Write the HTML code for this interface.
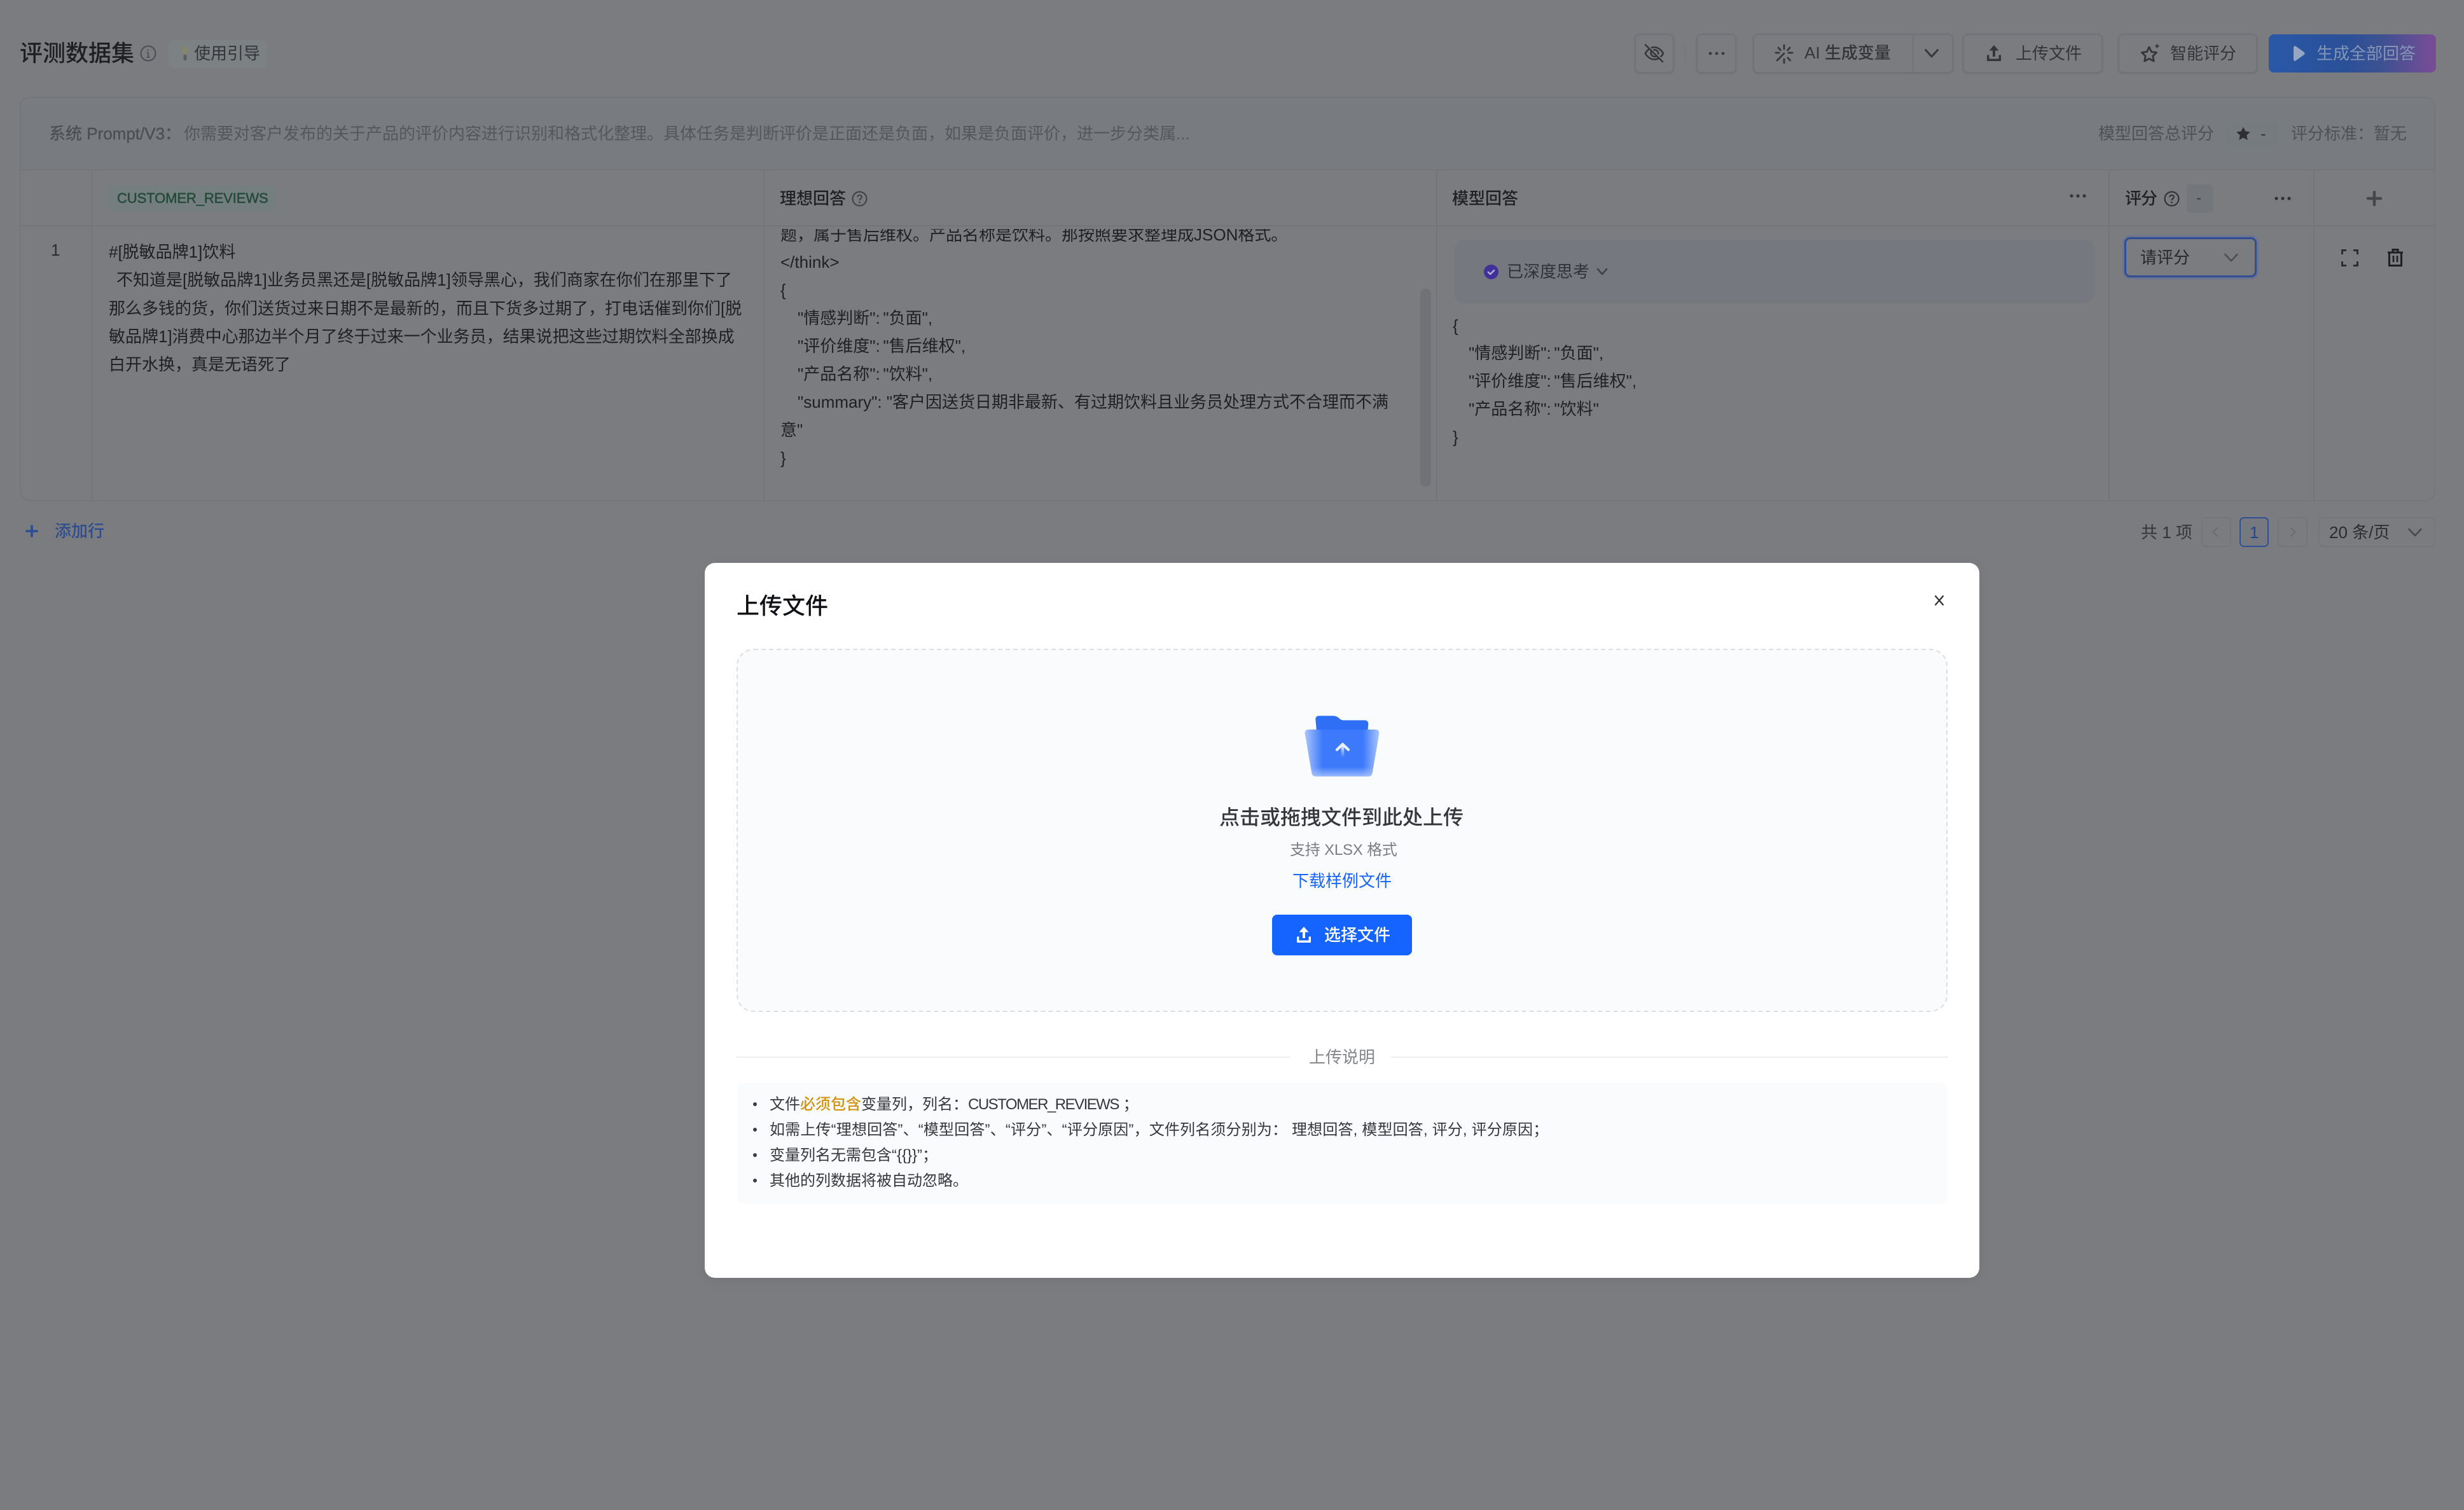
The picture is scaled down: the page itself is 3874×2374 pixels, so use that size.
<!DOCTYPE html>
<html lang="zh-CN">
<head>
<meta charset="utf-8">
<title>评测数据集</title>
<style>
html,body{margin:0;padding:0;width:3874px;height:2374px;overflow:hidden;background:#7a7c80}
body{position:relative;font-family:"Liberation Sans","Noto Sans CJK SC",sans-serif;font-size:26px;color:#26282c}
.t{position:absolute;white-space:pre;line-height:44px}
.b{position:absolute;box-sizing:border-box}
.btn{position:absolute;box-sizing:border-box;top:53px;height:62px;border:2px solid #70737a;border-radius:8px;box-shadow:0 1px 2px rgba(40,42,48,.18)}
svg{position:absolute;overflow:visible}
.hl{position:absolute;background:#72757a}
.m{color:#1f2024}
.ws{word-spacing:-2.5px}
</style>
</head>
<body>
<!-- header -->
<div class="t" style="left:31px;top:62px;font-size:36px;font-weight:500;color:#1d1f23">评测数据集</div>
<svg style="left:220px;top:71px" width="26" height="26" viewBox="0 0 26 26" fill="none" stroke="#4b4e54" stroke-width="2"><circle cx="13" cy="13" r="11.5"/><path d="M13 11.5V19M10.5 19h5M10.5 11.5H13" stroke-width="1.8"/><circle cx="13" cy="7.6" r="1.1" fill="#4b4e54" stroke="none"/></svg>
<div class="b" style="left:265px;top:63px;width:154px;height:44px;background:#7c8184;border-radius:8px"></div>
<svg style="left:284px;top:71px" width="14" height="28" viewBox="0 0 14 28"><ellipse cx="7" cy="8" rx="5.5" ry="7.5" fill="#85846f"/><rect x="4.5" y="15" width="5" height="9" rx="2" fill="#5a5c5e"/></svg>
<div class="t" style="left:305px;top:62px;color:#33353a">使用引导</div>

<!-- toolbar -->
<div class="btn" style="left:2570px;width:62px"></div>
<svg style="left:2585px;top:68px" width="32" height="32" viewBox="0 0 32 32" fill="none" stroke="#35373c" stroke-width="2.6" stroke-linecap="round" stroke-linejoin="round"><path d="M2 2.5L29 29"/><path d="M8 9C5 11 3 14 1.8 16c3 5 8 9.500 14.200 9.500 2.500 0 4.800-.7 6.800-1.800M12 6.800c1.300-.3 2.600-.5 4-.5 6.200 0 11.200 4.700 14.200 9.700-.9 1.500-2.200 3.200-3.800 4.800"/><path d="M11 13c-1.300 3.500 1 8 5.500 8 1 0 2-.3 2.800-.8M15.500 10.500c4-.5 7 2.500 6.700 6"/></svg>
<div class="b" style="left:2648px;top:70px;width:2px;height:30px;background:#75787c"></div>
<div class="btn" style="left:2667px;width:63px"></div>
<svg style="left:2686px;top:80px" width="26" height="8" viewBox="0 0 26 8" fill="#3a3c41"><circle cx="3" cy="4" r="2.400"/><circle cx="13" cy="4" r="2.400"/><circle cx="23" cy="4" r="2.400"/></svg>
<div class="btn" style="left:2756px;width:315px"></div>
<div class="b" style="left:3007px;top:54px;width:2px;height:60px;background:#70737a"></div>
<svg style="left:2790px;top:69px" width="30" height="32" viewBox="0 0 30 32" fill="none" stroke="#35373c" stroke-width="2.800" stroke-linecap="round"><path d="M15 2v6M15 24v6M24 6l-3.500 4M4 26l11-11M6 6l3.500 4M21 22l3.500 4M28 14h-6M2 14h5"/></svg>
<div class="t" style="left:2837px;top:61px;color:#33353a;font-weight:500">AI 生成变量</div>
<svg style="left:3026px;top:76px" width="22" height="16" viewBox="0 0 22 16" fill="none" stroke="#33353a" stroke-width="2.800" stroke-linecap="round" stroke-linejoin="round"><path d="M1.500 2.500L11 13 20.500 2.500"/></svg>
<div class="btn" style="left:3086px;width:220px"></div>
<svg style="left:3124px;top:70px" width="22" height="28" viewBox="0 0 22 28" fill="#33353a"><path d="M11 1L18.500 9.500H13V19H9V9.500H3.500Z"/><path d="M0 16.500h3.400V22.500H18.600V16.500H22V26H0Z"/></svg>
<div class="t" style="left:3169px;top:62px;color:#33353a">上传文件</div>
<div class="btn" style="left:3330px;width:219px"></div>
<svg style="left:3365px;top:68px" width="32" height="32" viewBox="0 0 32 32" fill="none" stroke="#33353a" stroke-width="2.800" stroke-linejoin="round"><path d="M14 6l3.600 7.500 8 1-5.800 5.600 1.500 8L14 24.200 6.700 28.100l1.500-8L2.400 14.500l8-1Z"/><path d="M26.500 1.500v6M23.500 4.500h6" stroke-width="2"/></svg>
<div class="t" style="left:3412px;top:62px;color:#33353a">智能评分</div>
<div class="b" style="left:3567px;top:54px;width:263px;height:60px;border-radius:8px;background:linear-gradient(90deg,#2a58a8 0%,#2a5098 45%,#3e5192 68%,#7a4c95 100%)"></div>
<svg style="left:3603px;top:71px" width="22" height="26" viewBox="0 0 22 26"><path d="M3 3.500C3 1.500 5 .6 6.500 1.600L19.500 11c1.400 1 1.400 3 0 4L6.500 24.400C5 25.400 3 24.500 3 22.500Z" fill="#97a6c3"/></svg>
<div class="t" style="left:3642px;top:62px;color:#8496b8">生成全部回答</div>

<!-- table card -->
<div class="b" style="left:31px;top:152px;width:3798px;height:636px;border:2px solid #73767b;border-radius:16px;overflow:hidden">
  <div class="b" style="left:0;top:0;width:100%;height:114px;background:#787c80"></div>
</div>
<div class="hl" style="left:31px;top:266px;width:3798px;height:2px"></div>
<div class="hl" style="left:31px;top:354px;width:3798px;height:2px"></div>
<div class="hl" style="left:143px;top:267px;width:2px;height:520px"></div>
<div class="hl" style="left:1200px;top:267px;width:2px;height:520px"></div>
<div class="hl" style="left:2258px;top:267px;width:2px;height:520px"></div>
<div class="hl" style="left:3315px;top:267px;width:2px;height:520px"></div>
<div class="hl" style="left:3637px;top:267px;width:2px;height:520px"></div>

<!-- prompt strip -->
<div class="t" style="left:77px;top:188px;color:#4c4f54;-webkit-text-stroke:.4px #4c4f54">系统 Prompt/V3：</div>
<div class="t" style="left:289px;top:188px;color:#54575c">你需要对客户发布的关于产品的评价内容进行识别和格式化整理。具体任务是判断评价是正面还是负面，如果是负面评价，进一步分类属...</div>
<div class="t" style="left:3299px;top:188px;color:#4e5156">模型回答总评分</div>
<div class="b" style="left:3499px;top:192px;width:83px;height:37px;background:#767b7f;border-radius:6px"></div>
<svg style="left:3515px;top:198px" width="24" height="24" viewBox="0 0 24 24" fill="#2d2f34"><path d="M12 1.500l3.300 6.900 7.500 1-5.500 5.200 1.400 7.500L12 18.500l-6.700 3.600 1.400-7.500L1.200 9.400l7.500-1Z"/></svg>
<div class="t" style="left:3554px;top:188px;color:#33353a">-</div>
<div class="t" style="left:3602px;top:188px;color:#4e5156">评分标准：暂无</div>

<!-- table header -->
<div class="b" style="left:168px;top:292px;width:267px;height:40px;background:#757e7f;border-radius:6px"></div>
<div class="t" style="left:184px;top:290px;font-size:22px;color:#234a39;-webkit-text-stroke:.5px #234a39;letter-spacing:-.1px">CUSTOMER_REVIEWS</div>
<div class="t" style="left:1226px;top:290px;font-weight:500;color:#1f2125">理想回答</div>
<svg style="left:1339px;top:300px" width="25" height="25" viewBox="0 0 24 24" fill="none" stroke="#3f4146" stroke-width="2"><circle cx="12" cy="12" r="10.500"/><path d="M8.800 9.500C8.800 7.500 10.400 6.500 12 6.500c1.800 0 3.200 1.200 3.200 2.900 0 2.400-3.200 2.400-3.200 5"/><circle cx="12" cy="17.500" r="1.300" fill="#3f4146" stroke="none"/></svg>
<div class="t" style="left:2283px;top:290px;font-weight:500;color:#1f2125">模型回答</div>
<svg style="left:3254px;top:304px" width="26" height="8" viewBox="0 0 26 8" fill="#34363b"><circle cx="3" cy="4" r="2.600"/><circle cx="13" cy="4" r="2.600"/><circle cx="23" cy="4" r="2.600"/></svg>
<div class="t" style="left:3341px;top:290px;font-weight:500;color:#1f2125;letter-spacing:-1px">评分</div>
<svg style="left:3402px;top:300px" width="25" height="25" viewBox="0 0 24 24" fill="none" stroke="#2f3136" stroke-width="2"><circle cx="12" cy="12" r="10.500"/><path d="M8.800 9.500C8.800 7.500 10.400 6.500 12 6.500c1.800 0 3.200 1.200 3.200 2.900 0 2.400-3.200 2.400-3.200 5"/><circle cx="12" cy="17.500" r="1.300" fill="#2f3136" stroke="none"/></svg>
<div class="b" style="left:3438px;top:290px;width:42px;height:45px;background:#73767a;border-radius:6px"></div>
<div class="t" style="left:3453px;top:290px;color:#3c3e43;font-size:24px">-</div>
<svg style="left:3576px;top:308px" width="26" height="8" viewBox="0 0 26 8" fill="#2f3136"><circle cx="3" cy="4" r="2.600"/><circle cx="13" cy="4" r="2.600"/><circle cx="23" cy="4" r="2.600"/></svg>
<svg style="left:3722px;top:301px" width="22" height="22" viewBox="0 0 22 22"><path d="M11 1v20M1 11h20" stroke="#44474c" stroke-width="4.600" stroke-linecap="round"/></svg>

<!-- row -->
<div class="t" style="left:80px;top:371px;color:#2b2d31">1</div>
<div class="t m" style="left:171px;top:374px">#[脱敏品牌1]饮料</div>
<div class="t m" style="left:183px;top:418px">不知道是[脱敏品牌1]业务员黑还是[脱敏品牌1]领导黑心，我们商家在你们在那里下了</div>
<div class="t m" style="left:171px;top:463px">那么多钱的货，你们送货过来日期不是最新的，而且下货多过期了，打电话催到你们[脱</div>
<div class="t m" style="left:171px;top:507px">敏品牌1]消费中心那边半个月了终于过来一个业务员，结果说把这些过期饮料全部换成</div>
<div class="t m" style="left:171px;top:551px">白开水换，真是无语死了</div>

<div class="b" style="left:1202px;top:360px;width:1056px;height:426px;overflow:hidden">
  <div class="t m" style="left:25px;top:-13px">题，属于售后维权。产品名称是饮料。那按照要求整理成JSON格式。</div>
  <div class="t m" style="left:25px;top:30px">&lt;/think&gt;</div>
  <div class="t m" style="left:25px;top:74px">{</div>
  <div class="t m ws" style="left:52px;top:118px">"情感判断": "负面",</div>
  <div class="t m ws" style="left:52px;top:162px">"评价维度": "售后维权",</div>
  <div class="t m ws" style="left:52px;top:206px">"产品名称": "饮料",</div>
  <div class="t m" style="left:52px;top:250px">"summary": "客户因送货日期非最新、有过期饮料且业务员处理方式不合理而不满</div>
  <div class="t m" style="left:25px;top:294px">意"</div>
  <div class="t m" style="left:25px;top:338px">}</div>
</div>
<div class="b" style="left:2233px;top:454px;width:17px;height:311px;background:#6f7276;border-radius:8px"></div>

<div class="b" style="left:2286px;top:377px;width:1007px;height:100px;background:#75797f;border-radius:16px"></div>
<svg style="left:2333px;top:416px" width="23" height="23" viewBox="0 0 23 23"><circle cx="11.500" cy="11.500" r="11.500" fill="#41309a"/><path d="M6.800 11.800l3.300 3.200 6-6" fill="none" stroke="#b9b3d0" stroke-width="2.400" stroke-linecap="round" stroke-linejoin="round"/></svg>
<div class="t" style="left:2369px;top:405px;color:#30323a">已深度思考</div>
<svg style="left:2510px;top:421px" width="18" height="12" viewBox="0 0 18 12" fill="none" stroke="#3f4248" stroke-width="2.600" stroke-linecap="round" stroke-linejoin="round"><path d="M2 2l7 8 7-8"/></svg>
<div class="t m" style="left:2284px;top:490px">{</div>
<div class="t m ws" style="left:2309px;top:533px">"情感判断": "负面",</div>
<div class="t m ws" style="left:2309px;top:577px">"评价维度": "售后维权",</div>
<div class="t m ws" style="left:2309px;top:621px">"产品名称": "饮料"</div>
<div class="t m" style="left:2284px;top:665px">}</div>

<div class="b" style="left:3340px;top:373px;width:208px;height:63px;border:3px solid #2f4d92;border-radius:9px;box-shadow:0 0 0 3px #6a7390"></div>
<div class="t" style="left:3365px;top:383px;color:#26282c">请评分</div>
<svg style="left:3497px;top:398px" width="22" height="14" viewBox="0 0 22 14" fill="none" stroke="#4c4e53" stroke-width="2.600" stroke-linecap="round" stroke-linejoin="round"><path d="M1.500 2L11 12 20.500 2"/></svg>
<svg style="left:3681px;top:392px" width="27" height="27" viewBox="0 0 27 27" fill="none" stroke="#26282c" stroke-width="2.800"><path d="M1.500 8V1.500H8M19 1.500h6.500V8M25.500 19v6.500H19M8 25.500H1.500V19"/></svg>
<svg style="left:3753px;top:391px" width="26" height="28" viewBox="0 0 26 28" fill="none" stroke="#1d1f23" stroke-width="3"><path d="M1 6h24M9 6V1.500h8V6"/><path d="M3.500 6V26.500H22.500V6"/><path d="M10 11v10M16 11v10" stroke-width="2.600"/></svg>

<!-- below table -->
<svg style="left:39px;top:824px" width="22" height="22" viewBox="0 0 22 22"><path d="M11 3v16M3 11h16" stroke="#2b4d96" stroke-width="3.600" stroke-linecap="round"/></svg>
<div class="t" style="left:86px;top:813px;color:#2e4c90;font-weight:500">添加行</div>
<div class="t" style="left:3366px;top:815px;color:#33353a">共 1 项</div>
<div class="b" style="left:3461px;top:813px;width:47px;height:47px;border:2px solid #73767b;border-radius:7px"></div>
<svg style="left:3478px;top:828px" width="10" height="17" viewBox="0 0 10 17" fill="none" stroke="#696c71" stroke-width="2"><path d="M8.500 1.500L1.500 8.500l7 7"/></svg>
<div class="b" style="left:3521px;top:813px;width:46px;height:47px;border:2px solid #2f4f96;border-radius:7px;background:#767a80"></div>
<div class="t" style="left:3537px;top:815px;color:#264488">1</div>
<div class="b" style="left:3581px;top:813px;width:47px;height:47px;border:2px solid #73767b;border-radius:7px"></div>
<svg style="left:3600px;top:828px" width="10" height="17" viewBox="0 0 10 17" fill="none" stroke="#696c71" stroke-width="2"><path d="M1.500 1.500l7 7-7 7"/></svg>
<div class="b" style="left:3645px;top:813px;width:184px;height:47px;border:2px solid #73767b;border-radius:7px"></div>
<div class="t" style="left:3662px;top:815px;color:#2a2c30">20 条/页</div>
<svg style="left:3786px;top:830px" width="22" height="14" viewBox="0 0 22 14" fill="none" stroke="#44464b" stroke-width="2.400" stroke-linecap="round" stroke-linejoin="round"><path d="M1.500 2L11 12 20.500 2"/></svg>

<!-- modal -->
<div class="b" style="left:1108px;top:885px;width:2004px;height:1124px;background:#fff;border-radius:16px;box-shadow:0 6px 24px rgba(0,0,0,.05)"></div>
<div class="t" style="left:1158px;top:931px;font-size:36px;font-weight:500;color:#0f1014">上传文件</div>
<svg style="left:3041px;top:935px" width="16" height="18" viewBox="0 0 16 18" fill="none" stroke="#2b2d31" stroke-width="2.200"><path d="M1.500 1.500L14.500 16.500M14.500 1.500L1.500 16.500"/></svg>

<svg style="left:1158px;top:1020px" width="1904" height="571" viewBox="0 0 1904 571"><rect x="1" y="1" width="1902" height="569" rx="26" fill="#f9fbfd" stroke="#dcdee2" stroke-width="2" stroke-dasharray="7 5"/></svg>

<svg style="left:1980px;top:1080px" width="260" height="200" viewBox="0 0 780 600">
  <defs>
    <linearGradient id="fg" x1="0" y1="0" x2="1" y2="0">
      <stop offset="0" stop-color="#a9c5fc"/><stop offset=".24" stop-color="#3d79fb"/><stop offset=".78" stop-color="#3d79fb"/><stop offset="1" stop-color="#a9c5fc"/>
    </linearGradient>
    <linearGradient id="fb" x1="0" y1="0" x2="0" y2="1">
      <stop offset="0" stop-color="#a9c5fc" stop-opacity="0"/><stop offset=".8" stop-color="#a9c5fc" stop-opacity="0"/><stop offset="1" stop-color="#a9c5fc" stop-opacity=".85"/>
    </linearGradient>
    <linearGradient id="fa" x1="0" y1="0" x2="0" y2="1">
      <stop offset="0" stop-color="#e6eeff"/><stop offset="1" stop-color="#e6eeff" stop-opacity="0"/>
    </linearGradient>
  </defs>
  <path d="M265 152c0-10 7-16 16-16h66c12 0 21 4 30 12 5 5 10 9 20 9h100c10 0 17 7 17 16l-3 37H270Z" fill="#2f6ff5"/>
  <path d="M215 220c-2-12 6-19 16-19h318c10 0 18 7 16 19l-32 186c-2 10-9 16-19 16H266c-10 0-17-6-19-16Z" fill="url(#fg)"/>
  <path d="M215 220c-2-12 6-19 16-19h318c10 0 18 7 16 19l-32 186c-2 10-9 16-19 16H266c-10 0-17-6-19-16Z" fill="url(#fb)"/>
  <path d="M366 296l27-26 27 26" fill="none" stroke="#e6eeff" stroke-width="13" stroke-linecap="round" stroke-linejoin="round"/>
  <rect x="386" y="276" width="14" height="56" fill="url(#fa)"/>
</svg>

<div class="t" style="left:1917px;top:1263px;font-size:32px;font-weight:500;color:#35373d">点击或拖拽文件到此处上传</div>
<div class="t" style="left:2028px;top:1315px;font-size:24px;color:#7c7e84;letter-spacing:-.2px">支持 XLSX 格式</div>
<div class="t" style="left:2032px;top:1363px;color:#1664ff">下载样例文件</div>
<div class="b" style="left:2000px;top:1438px;width:220px;height:64px;background:#1664ff;border-radius:8px"></div>
<svg style="left:2039px;top:1456px" width="22" height="28" viewBox="0 0 22 28" fill="#fff"><path d="M11 1L18.500 9.500H13V19H9V9.500H3.500Z"/><path d="M0 16.500h3.400V22.500H18.600V16.500H22V26H0Z"/></svg>
<div class="t" style="left:2082px;top:1448px;color:#fff;font-weight:500">选择文件</div>

<div class="b" style="left:1158px;top:1661px;width:870px;height:2px;background:#eceef0"></div>
<div class="b" style="left:2187px;top:1661px;width:875px;height:2px;background:#eceef0"></div>
<div class="t" style="left:2058px;top:1640px;color:#85878c">上传说明</div>

<div class="b" style="left:1159px;top:1702px;width:1902px;height:190px;background:#f9fbfd;border-radius:8px"></div>
<div style="position:absolute;left:0;top:0;font-size:24px;color:#35373c">
  <div class="b" style="left:1184px;top:1733px;width:6px;height:6px;border-radius:50%;background:#3c3e43"></div>
  <div class="t" style="left:1210px;top:1715px">文件<span style="color:#d4920f;font-weight:500">必须包含</span>变量列，列名：<span style="letter-spacing:-1.5px">CUSTOMER_REVIEWS</span> ；</div>
  <div class="b" style="left:1184px;top:1773px;width:6px;height:6px;border-radius:50%;background:#3c3e43"></div>
  <div class="t" style="left:1210px;top:1755px;letter-spacing:.16px">如需上传“理想回答”、“模型回答”、“评分”、“评分原因”，文件列名须分别为： 理想回答, 模型回答, 评分, 评分原因；</div>
  <div class="b" style="left:1184px;top:1813px;width:6px;height:6px;border-radius:50%;background:#3c3e43"></div>
  <div class="t" style="left:1210px;top:1795px">变量列名无需包含“{{}}”；</div>
  <div class="b" style="left:1184px;top:1853px;width:6px;height:6px;border-radius:50%;background:#3c3e43"></div>
  <div class="t" style="left:1210px;top:1835px">其他的列数据将被自动忽略。</div>
</div>
</body>
</html>
